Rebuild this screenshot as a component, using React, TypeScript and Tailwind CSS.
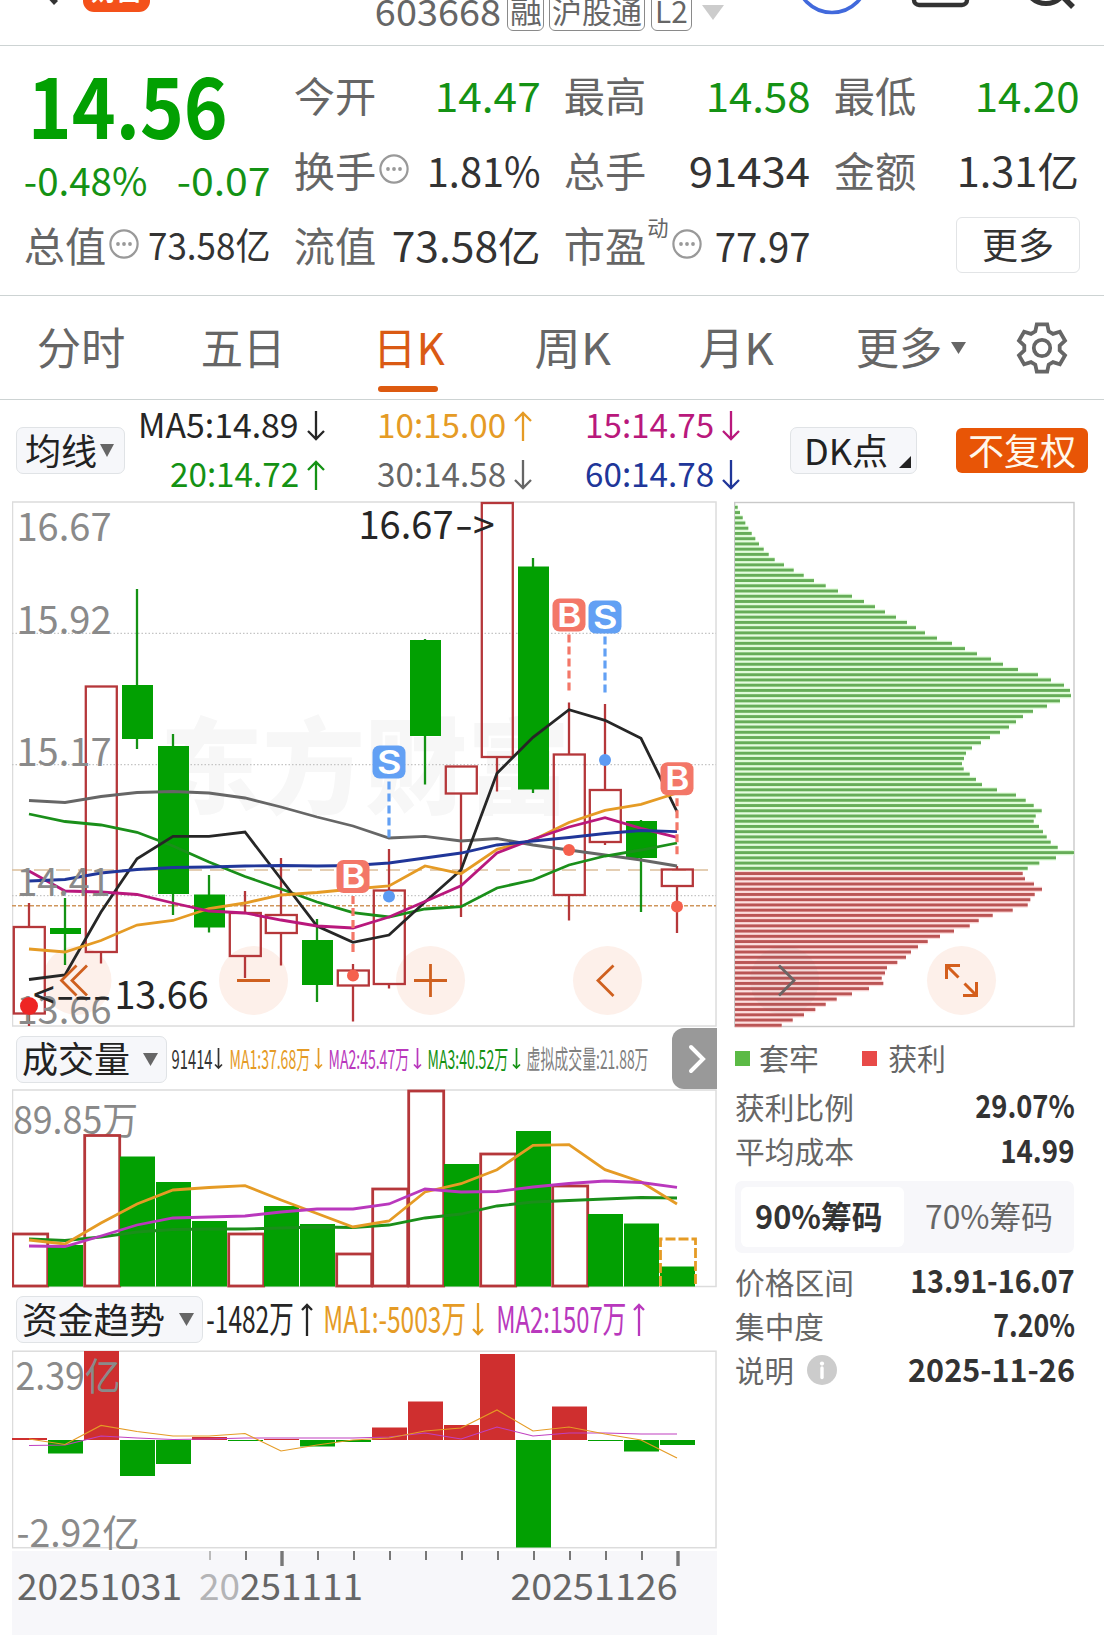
import React, { useLayoutEffect, useRef, useState } from "react";

const FONT = '"Noto Sans CJK SC", sans-serif';

/* Text squeezed or widened horizontally so that its ink spans exactly `w` pixels. */
function Fit({ w, size, className = "", children }: { w: number; size: number; className?: string; children: React.ReactNode }) {
  const ref = useRef<HTMLSpanElement>(null);
  const [scale, setScale] = useState(1);
  const bearing = size * 0.03;
  useLayoutEffect(() => {
    if (ref.current) setScale(w / (ref.current.offsetWidth - 2 * bearing));
  }, [w, size, bearing]);
  return (
    <span className={"block shrink-0 whitespace-nowrap leading-none " + className} style={{ width: w, fontSize: size }}>
      <span
        ref={ref}
        className="inline-block origin-left"
        style={{ transform: `translate(${-bearing * scale}px, -0.05em) scaleX(${scale})` }}
      >
        {children}
      </span>
    </span>
  );
}

function Dots() {
  return (
    <svg width="30" height="30" viewBox="0 0 30 30" className="shrink-0">
      <circle cx="15" cy="15" r="13.6" fill="none" stroke="#999" strokeWidth="2.2" />
      <circle cx="9" cy="15" r="1.9" fill="#999" />
      <circle cx="15" cy="15" r="1.9" fill="#999" />
      <circle cx="21" cy="15" r="1.9" fill="#999" />
    </svg>
  );
}

function Caret({ w = 14, h = 13, color = "#666" }: { w?: number; h?: number; color?: string }) {
  return (
    <svg width={w} height={h} viewBox="0 0 10 10" preserveAspectRatio="none" className="shrink-0">
      <path d="M0 0H10L5 10Z" fill={color} />
    </svg>
  );
}

function Arrow({ up = false, w = 18, h = 30 }: { up?: boolean; w?: number; h?: number }) {
  const m = w / 2;
  const head = m - 1;
  return (
    <svg width={w} height={h} className={up ? "shrink-0 rotate-180" : "shrink-0"} fill="none" stroke="currentColor" strokeWidth={w < 10 ? 1.7 : 2.3}>
      <path d={`M${m} 0V${h - 1.5}M1 ${h - 2 - head}L${m} ${h - 2}L${w - 1} ${h - 2 - head}`} />
    </svg>
  );
}

function Header() {
  return (
    <header className="flex h-[46px] items-start overflow-hidden border-b border-[#cdd3d3] text-[#666]">
      <svg width="83" height="44" viewBox="0 0 83 44">
        <path d="M42 -12L56 3" stroke="#333" strokeWidth="5.5" fill="none" />
      </svg>
      <div className="-mt-[26px] h-[38px] w-[67px] rounded-[11px] bg-[#f4511a] pl-[9px] pt-[4px] font-bold text-white">
        <Fit w={49} size={25}>财富</Fit>
      </div>
      <div className="ml-[226px] flex h-[24px] items-center">
        <Fit w={124} size={36}>603668</Fit>
      </div>
      <div className="-mt-[9px] ml-[7px] flex h-[40px] w-[37px] items-center justify-center rounded-[6px] border-[1.5px] border-[#8a8a8a]">
        <Fit w={30} size={30}>融</Fit>
      </div>
      <div className="-mt-[9px] ml-[5px] flex h-[40px] w-[96px] items-center justify-center rounded-[6px] border-[1.5px] border-[#8a8a8a]">
        <Fit w={88} size={30}>沪股通</Fit>
      </div>
      <div className="-mt-[9px] ml-[6px] flex h-[40px] w-[41px] items-center justify-center rounded-[6px] border-[1.5px] border-[#8a8a8a]">
        <Fit w={31} size={30}>L2</Fit>
      </div>
      <div className="ml-[10px] pt-[5px]"><Caret w={22} h={15} color="#ccc" /></div>
      <svg width="320" height="44" viewBox="780 0 320 44" className="ml-auto mr-[4px]" fill="none">
        <circle cx="832" cy="-23" r="35.5" stroke="#4169dc" strokeWidth="3.6" />
        <rect x="914" y="-40" width="53" height="45" rx="5" stroke="#333" strokeWidth="4.4" />
        <circle cx="1046" cy="-18" r="21.5" stroke="#333" strokeWidth="5" />
        <path d="M1060 -6L1073 7" stroke="#333" strokeWidth="5.5" />
      </svg>
    </header>
  );
}

function Cell({ label, lw = 80, children }: { label: string; lw?: number; children: React.ReactNode }) {
  return (
    <div className="flex h-[75px] items-center text-[#333]">
      <Fit w={lw} size={41} className="text-[#666]">{label}</Fit>
      {children}
    </div>
  );
}

function Quote() {
  return (
    <section className="flex h-[250px] gap-[26px] border-b border-[#cdd3d3] pl-[25px] pr-[25px] pt-[13px]">
      <div className="w-[244px]">
        <div className="flex h-[95px] items-center pl-[5px] font-bold text-[#02a002]">
          <Fit w={196} size={84}>14.56</Fit>
        </div>
        <div className="flex h-[55px] items-center justify-between text-[#149214]">
          <Fit w={121} size={39}>-0.48%</Fit>
          <Fit w={91} size={39}>-0.07</Fit>
        </div>
        <Cell label="总值">
          <div className="ml-[4px] mt-[-5px]"><Dots /></div>
          <Fit w={120} size={37} className="ml-auto">73.58亿</Fit>
        </Cell>
      </div>
      <div className="w-[244px]">
        <Cell label="今开"><Fit w={103} size={41} className="ml-auto text-[#149214]">14.47</Fit></Cell>
        <Cell label="换手">
          <div className="ml-[4px] mt-[-6px]"><Dots /></div>
          <Fit w={111} size={41} className="ml-auto">1.81%</Fit>
        </Cell>
        <Cell label="流值"><Fit w={146} size={41} className="ml-auto">73.58亿</Fit></Cell>
      </div>
      <div className="w-[244px]">
        <Cell label="最高"><Fit w={102} size={41} className="ml-auto text-[#149214]">14.58</Fit></Cell>
        <Cell label="总手"><Fit w={119} size={41} className="ml-auto">91434</Fit></Cell>
        <Cell label="市盈">
          <div className="ml-[3px] mb-[40px]"><Fit w={20} size={22} className="text-[#666]">动</Fit></div>
          <div className="ml-[4px] mt-[-5px]"><Dots /></div>
          <Fit w={93} size={41} className="ml-auto">77.97</Fit>
        </Cell>
      </div>
      <div className="w-[243px]">
        <Cell label="最低"><Fit w={102} size={41} className="ml-auto text-[#149214]">14.20</Fit></Cell>
        <Cell label="金额"><Fit w={120} size={41} className="ml-auto">1.31亿</Fit></Cell>
        <div className="flex h-[71px] items-center justify-end">
          <div className="-mr-[2px] flex h-[56px] w-[124px] items-center justify-center rounded-[6px] border-[1.5px] border-[#e2e4e6] text-[#333]">
            <Fit w={70} size={36}>更多</Fit>
          </div>
        </div>
      </div>
    </section>
  );
}

function Tabs() {
  return (
    <nav className="flex h-[104px] items-center border-b border-[#cdd3d3] pl-[38px] text-[#666]">
      <Fit w={86} size={44}>分时</Fit>
      <Fit w={82} size={44} className="ml-[78px]">五日</Fit>
      <div className="relative ml-[90px] text-[#da5a14]">
        <Fit w={69} size={44}>日K</Fit>
        <span className="absolute -bottom-[22px] left-[4px] h-[6px] w-[60px] rounded-full bg-[#dd5a10]" />
      </div>
      <Fit w={73} size={44} className="ml-[93px]">周K</Fit>
      <Fit w={72} size={44} className="ml-[91px]">月K</Fit>
      <Fit w={84} size={44} className="ml-[85px]">更多</Fit>
      <div className="ml-[10px]"><Caret w={15} h={12} /></div>
      <svg width="52" height="52" viewBox="-26 -26 52 52" className="ml-[50px]" fill="none" stroke="#666" strokeWidth="3.8">
        <path d="M-5.2 -23.6H5.2L6.7 -16.6L11 -14.1L17.9 -16.3L23 -7.4L17.7 -2.5V2.5L23 7.4L17.9 16.3L11 14.1L6.7 16.6L5.2 23.6H-5.2L-6.7 16.6L-11 14.1L-17.9 16.3L-23 7.4L-17.7 2.5V-2.5L-23 -7.4L-17.9 -16.3L-11 -14.1L-6.7 -16.6Z" />
        <circle r="8.2" />
      </svg>
    </nav>
  );
}

function MaItem({ w, up, className, children }: { w: number; up?: boolean; className: string; children: string }) {
  return (
    <div className={"flex h-[49px] items-center justify-end gap-[9px] " + className}>
      <Fit w={w} size={34}>{children}</Fit>
      <Arrow up={up} />
    </div>
  );
}

function MaBar() {
  return (
    <div className="flex h-[101px] items-center">
      <div className="ml-[16px] flex h-[47px] w-[109px] items-center gap-[4px] rounded-[7px] border border-[#e0e3e6] bg-[#f6f7fa] pl-[9px] text-[#222]">
        <Fit w={70} size={36}>均线</Fit>
        <Caret />
      </div>
      <div className="w-[200px]">
        <MaItem w={159} className="text-[#262626]">MA5:14.89</MaItem>
        <MaItem w={127} up className="text-[#149214]">20:14.72</MaItem>
      </div>
      <div className="w-[207px]">
        <MaItem w={127} up className="text-[#e59b25]">10:15.00</MaItem>
        <MaItem w={127} className="text-[#666]">30:14.58</MaItem>
      </div>
      <div className="w-[208px]">
        <MaItem w={127} className="text-[#b9187c]">15:14.75</MaItem>
        <MaItem w={127} className="text-[#203699]">60:14.78</MaItem>
      </div>
      <div className="ml-[50px] flex h-[47px] w-[127px] items-center rounded-[7px] border border-[#e0e3e6] bg-[#f6f7fa] pl-[14px] text-[#222]">
        <Fit w={82} size={36}>DK点</Fit>
        <svg width="12" height="12" className="ml-[12px] mt-[22px]"><path d="M12 0V12H0Z" fill="#222" /></svg>
      </div>
      <div className="ml-[39px] flex h-[45px] w-[132px] items-center justify-center rounded-[6px] bg-[#e85506] text-[#fff8ec]">
        <Fit w={106} size={36}>不复权</Fit>
      </div>
    </div>
  );
}

/* [isUp, high, top, bottom, low] in chart pixels, one candle every 36px */
const candles: [boolean, number, number, number, number][] = [
  [true, 903, 927, 1013.5, 1026],
  [false, 898, 928, 934, 965],
  [true, 687, 686.5, 952, 963.5],
  [false, 589, 685, 739, 749],
  [false, 734, 746, 894, 915],
  [false, 875, 894.5, 927.5, 932.5],
  [true, 891, 913, 956, 978],
  [true, 858, 915, 933, 965.5],
  [false, 919, 940, 985, 1002],
  [true, 964, 970.5, 985.5, 1021.5],
  [true, 849, 890.5, 984, 988.5],
  [false, 639, 640, 736, 784.5],
  [true, 766, 766.5, 793.5, 917],
  [true, 503, 503, 757, 791.5],
  [false, 558, 566.5, 789.5, 793],
  [true, 702.5, 754.5, 895, 920.5],
  [true, 704, 790, 842, 845],
  [false, 820, 821, 858, 912],
  [true, 866, 869.5, 886, 933],
];

const X = (i: number) => 29 + 36 * i;
const line = (ys: number[]) => ys.map((y, i) => `${X(i)},${y}`).join(" ");

const averages: [string, number[]][] = [
  ["#666666", [800.5, 802.5, 796.5, 792.5, 791.5, 793, 798, 807, 817, 826, 838, 836.3, 841, 838.5, 845, 850, 855, 860, 866]],
  ["#1a8f1a", [814, 821.5, 825, 832.3, 846, 862, 876.5, 889, 902, 912.7, 917, 909, 906.7, 888, 880, 865, 856, 850, 843]],
  ["#262626", [979.5, 975, 912, 858.7, 836.3, 836.3, 832, 879, 926, 942.3, 935, 902, 870, 773.3, 737.3, 709.7, 720.3, 738.3, 811.7]],
  ["#e59b25", [949, 952, 940.5, 925, 920.5, 908.5, 903, 895, 892.5, 889, 886, 866, 873.7, 849.3, 840, 822.5, 810.3, 804.3, 793]],
  ["#b9187c", [871, 891, 892, 894.5, 903, 911, 913, 920, 926, 928, 917, 901.5, 885.7, 853, 839.3, 827, 817.7, 828.3, 837.3]],
  ["#203699", [881, 879.5, 873, 869.5, 867.5, 867, 866, 865.5, 866, 865.5, 863, 858, 853, 845, 841, 837.5, 833.5, 830.5, 831.7]],
];

const RED = "#b5373a";
const GREEN = "#02a002";

/* letter, x, badge top */
const signals: [string, number, number][] = [
  ["B", 569, 598.5],
  ["S", 605, 600.5],
  ["S", 389, 745.5],
  ["B", 353, 860],
  ["B", 677, 762.3],
];

function Num({ x, y, w, size = 39, fill = "#8a8a8a", children }: { x: number; y: number; w: number; size?: number; fill?: string; children: string }) {
  return (
    <text x={x - 1.6} y={y + 0.6} textLength={w + 3.2} lengthAdjust="spacingAndGlyphs" fontSize={size} fill={fill}>{children}</text>
  );
}

function KLine() {
  return (
    <svg width="706" height="528" viewBox="12 501 706 528" className="block" fontFamily={FONT}>
      <rect x="12.5" y="502" width="703.5" height="524" fill="#fff" stroke="#dcdcdc" strokeWidth="1.5" />
      <text x="160" y="806" fontSize="104" fontWeight="900" textLength="410" lengthAdjust="spacingAndGlyphs" fill="#f7f7f7">东方财富</text>
      {[633.4, 764.6, 895.6].map((y) => (
        <path key={y} d={`M12 ${y}H716`} stroke="#c4c4c4" strokeWidth="1.2" strokeDasharray="1.5 2" />
      ))}
      <path d="M12 870H716" stroke="#dcbf9a" strokeWidth="1.5" strokeDasharray="14 8" />
      <path d="M12 905.7H716" stroke="#cf965c" strokeWidth="1.6" strokeDasharray="4 2" />
      {[77, 253.5, 430.5, 607.5].map((x) => <circle key={x} cx={x} cy="980.5" r="34.5" fill="#fdf0ea" />)}
      {candles.map(([up, h, t, b, l], i) => {
        const x = X(i);
        return up ? (
          <g key={i} fill="none" stroke={RED} strokeWidth="2.3">
            <path d={`M${x} ${h}V${t}M${x} ${b}V${l}`} />
            <rect x={x - 15.2} y={t} width="31" height={b - t} />
          </g>
        ) : (
          <g key={i}>
            <path d={`M${x} ${h}V${l}`} stroke="#149214" strokeWidth="2.3" />
            <rect x={x - 15} y={t} width="31" height={b - t} fill={GREEN} />
          </g>
        );
      })}
      {averages.map(([c, ys]) => (
        <polyline key={c} points={line(ys)} fill="none" stroke={c} strokeWidth="2.8" />
      ))}
      <Num x={18} y={540} w={92}>16.67</Num>
      <Num x={18} y={633} w={92}>15.92</Num>
      <Num x={18} y={765} w={92}>15.17</Num>
      <Num x={18} y={895.5} w={91}>14.41</Num>
      <Num x={18} y={1023} w={92}>13.66</Num>
      <circle cx="29" cy="1006" r="9" fill="#ee2524" />
      <g fontSize="39" fill="#262626">
        <text x="33" y="1008.5">&lt;</text>
        <text x="56" y="1008.5" textLength="55" lengthAdjust="spacingAndGlyphs">---</text>
        <Num x={116} y={1008} w={91} fill="#262626">13.66</Num>
        <Num x={360} y={538} w={92} fill="#262626">16.67</Num>
        <text x="455" y="538.5" textLength="18" lengthAdjust="spacingAndGlyphs">-</text>
        <text x="473" y="538.5">&gt;</text>
      </g>
      {signals.map(([s, x, y]) => {
        const c = s === "B" ? "#f37768" : "#62a0f4";
        return (
          <g key={x}>
            <path d={`M${x} ${y + 36}V${y + 93}`} stroke={c} strokeWidth="3.2" strokeDasharray="8 4" />
            <rect x={x - 16.5} y={y} width="33" height="33" rx="7" fill={c} />
            <text x={x - 12} y={y + 28} fontSize="32" fontWeight="600" textLength="24.5" lengthAdjust="spacingAndGlyphs" fill="#fff" fontFamily="Inter, sans-serif">{s}</text>
          </g>
        );
      })}
      {[[353, 975.5], [569, 850], [677, 906.5]].map(([x, y]) => <circle key={x} cx={x} cy={y} r="6" fill="#f5604d" />)}
      {[[389, 896.5], [605, 760]].map(([x, y]) => <circle key={x} cx={x} cy={y} r="6" fill="#5c9bf3" />)}
      <g stroke="#cf601f" strokeWidth="2.8" fill="none">
        <path d="M76.5 965.5L61.5 980.5L76.5 995.5M87 965.5L72 980.5L87 995.5" />
        <path d="M237 980.5H270M414 980.5H447M430.5 964V997" />
        <path d="M613.5 965.5L598 980.5L613.5 996" />
      </g>
    </svg>
  );
}

const chips = [
  2.7, 5, 7.7, 10.3, 13.3, 16.7, 20.3, 24, 28.7, 33.7, 39.7, 49, 58.7, 68.7, 79, 90.7, 103, 117, 129, 140,
  150, 161, 172, 181, 190, 202, 217, 230, 242, 256, 268, 283, 303, 316, 329, 335, 336, 325, 312, 298,
  288, 281, 274, 265, 255, 246, 237, 231, 229, 227, 228.7, 234.7, 241, 247, 262, 281, 290.7, 298.7, 306.7, 300.7,
  298.7, 304, 308, 311.7, 315.7, 322.7, 339, 321, 304.3, 292.7,
  287.7, 290, 299, 307, 299.7, 295.3, 292.7, 277.7, 257.7, 243.7, 234.7, 219, 205, 192.7, 183, 176, 171,
  162.3, 152, 150, 146.7, 148.3, 134, 117, 101.7, 90.7, 80.3, 69, 57.7, 46.7,
];

function Chips() {
  return (
    <svg width="342" height="528" viewBox="734 501 342 528" className="block">
      <rect x="734.7" y="502.5" width="339.3" height="524" fill="none" stroke="#c9c9c9" strokeWidth="1.4" />
      {chips.map((v, i) => {
        const y = 507.3 + i * 5.232;
        const green = i < 70;
        return (
          <g key={i}>
            <rect x="735" y={y - 2.6} width={v} height="5.3" fill={green ? "#dffbd8" : "#fbd9d9"} />
            <rect x="735" y={y - 1.45} width={v} height="2.9" fill={green ? "#66ad58" : "#bb5555"} />
          </g>
        );
      })}
      <circle cx="784.5" cy="980.5" r="34.5" fill="#666" opacity="0.06" />
      <path d="M779 965.5L794 980.5L779 995.5" fill="none" stroke="#6b6464" strokeWidth="2.8" />
      <circle cx="961.5" cy="980.5" r="34.5" fill="#fdf0ea" />
      <path d="M960 965.5H946.5V979M946.5 965.5L958.5 977.5M963 995.5H976.5V982M976.5 995.5L964.5 983.5" fill="none" stroke="#d45e1c" strokeWidth="3" />
    </svg>
  );
}

const volumes: [boolean, number][] = [
  [true, 1233], [false, 1245], [true, 1134.5], [false, 1156.5], [false, 1182], [false, 1221], [true, 1233],
  [false, 1206], [false, 1224], [true, 1253], [true, 1188], [true, 1090], [false, 1164], [true, 1153],
  [false, 1131], [true, 1185], [false, 1214], [false, 1223.5], [false, 1266.5],
];

function Volume() {
  return (
    <svg width="706" height="200" viewBox="12 1089 706 200" className="block" fontFamily={FONT}>
      <rect x="12.5" y="1090" width="703.5" height="196.5" fill="none" stroke="#dcdcdc" strokeWidth="1.5" />
      <Num x={14.5} y={1133.5} w={122} size={38}>89.85万</Num>
      {volumes.map(([up, t], i) => {
        const x = 12 + 36 * i;
        return up ? (
          <rect key={i} x={x + 0.7} y={t + 1} width="35" height={1285 - t} fill="#fff" stroke={RED} strokeWidth="2.8" />
        ) : (
          <rect key={i} x={x} y={t} width="35" height={1286.5 - t} fill={GREEN} />
        );
      })}
      <path d="M660.5 1286V1239H695.5V1286" fill="none" stroke="#e59b25" strokeWidth="2.8" strokeDasharray="10 3" />
      <g fill="none" strokeWidth="2.8">
        <polyline stroke="#1a8f1a" points={line([1239, 1240.5, 1237, 1232, 1229.5, 1229, 1229, 1228, 1227, 1227.5, 1225, 1218, 1214, 1206, 1202, 1200.5, 1199, 1197.5, 1198])} />
        <polyline stroke="#e59b25" points={line([1240, 1244, 1223, 1204, 1190, 1187.5, 1185.7, 1200, 1213.5, 1227, 1221, 1192, 1183.7, 1169.7, 1145.3, 1144.7, 1169.7, 1181.7, 1204])} />
        <polyline stroke="#b938bd" points={line([1246, 1246.5, 1236, 1225, 1218, 1217, 1216, 1212, 1209, 1209, 1204, 1189, 1192, 1191.5, 1187, 1183.5, 1181, 1182.5, 1187.3])} />
      </g>
    </svg>
  );
}

/* end of each bar, with the zero line at 1440 */
const funds = [1438, 1453.5, 1351, 1476, 1464, 1437, 1441, 1439, 1446.5, 1442, 1427.5, 1401.5, 1425, 1354, 1547.5, 1406.5, 1441, 1451.5, 1445];

function Funds() {
  return (
    <svg width="706" height="200" viewBox="12 1350 706 200" className="block" fontFamily={FONT}>
      <rect x="12.5" y="1351.2" width="703.5" height="196.5" fill="none" stroke="#dcdcdc" strokeWidth="1.5" />
      {funds.map((v, i) => (
        <rect key={i} x={12 + 36 * i} y={Math.min(v, 1440)} width="35" height={Math.abs(v - 1440)} fill={v < 1440 ? "#cf2f2f" : GREEN} />
      ))}
      <g fill="none" strokeWidth="1.2">
        <polyline stroke="#c040c0" points={line([1445.5, 1445, 1436, 1438, 1439.5, 1439, 1438, 1438, 1438, 1438, 1437, 1433, 1439, 1427, 1436, 1433, 1433, 1434, 1434])} />
        <polyline stroke="#e59b25" points={line([1439, 1444.5, 1425.5, 1431.5, 1436, 1436, 1433.5, 1451, 1445, 1440, 1438, 1431, 1428, 1410, 1431, 1427, 1434, 1440, 1458])} />
      </g>
      <Num x={17} y={1389.5} w={102} size={38}>2.39亿</Num>
      <Num x={18} y={1546} w={120} size={38}>-2.92亿</Num>
    </svg>
  );
}

function Dates() {
  return (
    <svg width="705" height="84" viewBox="12 1551 705 84" className="mt-[1px] block bg-[#f7f7fa]" fontFamily={FONT}>
      {Array.from({ length: 14 }, (_, i) => {
        const x = 210 + 36 * i;
        const big = i === 2 || i === 13;
        return <path key={i} d={`M${x} 1551V${big ? 1566 : 1560}`} stroke={i === 0 ? "#bbb" : "#777"} strokeWidth={big ? 3.4 : 2} />;
      })}
      <Num x={18.5} y={1599.5} w={162} size={36} fill="#666">20251031</Num>
      <text x="199" y="1600" fontSize="36" textLength="164" lengthAdjust="spacingAndGlyphs" fill="#666">
        <tspan fill="#b4b4b6">20</tspan>251111
      </text>
      <Num x={512} y={1599.5} w={164} size={36} fill="#666">20251126</Num>
    </svg>
  );
}

function Picker({ text, w, bw }: { text: string; w: number; bw: number }) {
  return (
    <div
      className="ml-[4px] flex h-[47px] shrink-0 items-center justify-between rounded-[7px] border border-[#e0e3e6] bg-[#f6f7fa] pl-[6px] pr-[8px] text-[#222]"
      style={{ width: bw }}
    >
      <Fit w={w} size={36}>{text}</Fit>
      <Caret w={15} />
    </div>
  );
}

function Stat({ label, w, value, vw, info }: { label: string; w: number; value: string; vw: number; info?: boolean }) {
  return (
    <div className="flex h-[44.3px] items-center">
      <Fit w={w} size={30} className="text-[#666]">{label}</Fit>
      {info && (
        <svg width="30" height="30" className="ml-[14px]">
          <circle cx="15" cy="15" r="15" fill="#ccc" />
          <circle cx="15" cy="8.6" r="2.1" fill="#fff" />
          <path d="M15 13V22.5" stroke="#fff" strokeWidth="3.4" strokeLinecap="round" />
        </svg>
      )}
      <Fit w={vw} size={31.5} className="ml-auto font-bold text-[#333]">{value}</Fit>
    </div>
  );
}

function Left() {
  return (
    <div className="w-[706px]">
      <KLine />
      <div className="flex h-[60px] items-center">
        <Picker text="成交量" w={106} bw={151} />
        <div className="ml-[5px] flex items-center text-[#333]"><Fit w={40} size={26}>91414</Fit><div className="ml-[2px]"><Arrow w={9} h={22} /></div></div>
        <div className="ml-[7px] flex items-center text-[#e59b25]"><Fit w={80} size={26}>MA1:37.68万</Fit><div className="ml-[4px]"><Arrow w={9} h={22} /></div></div>
        <div className="ml-[6px] flex items-center text-[#b938bd]"><Fit w={80} size={26}>MA2:45.47万</Fit><div className="ml-[4px]"><Arrow w={9} h={22} /></div></div>
        <div className="ml-[6px] flex items-center text-[#149214]"><Fit w={80} size={26}>MA3:40.52万</Fit><div className="ml-[4px]"><Arrow w={9} h={22} /></div></div>
        <Fit w={121} size={26} className="ml-[6px] text-[#808080]">虚拟成交量:21.88万</Fit>
        <div className="ml-auto mr-[1px] -mt-[1px] flex h-[61px] w-[45px] shrink-0 items-center justify-center rounded-l-[12px] bg-[#999]">
          <svg width="20" height="30" className="ml-[4px]" fill="none" stroke="#fff" strokeWidth="4" strokeLinecap="round"><path d="M4 3L16 15L4 27" /></svg>
        </div>
      </div>
      <Volume />
      <div className="flex h-[61px] items-center">
        <Picker text="资金趋势" w={141} bw={187} />
        <div className="ml-[4px] flex items-center text-[#262626]"><Fit w={86} size={37}>-1482万</Fit><div className="ml-[8px]"><Arrow up w={12} h={33} /></div></div>
        <div className="ml-[11px] flex items-center text-[#e59b25]"><Fit w={141} size={37}>MA1:-5003万</Fit><div className="ml-[7px]"><Arrow w={12} h={33} /></div></div>
        <div className="ml-[13px] flex items-center text-[#b938bd]"><Fit w={129} size={37}>MA2:1507万</Fit><div className="ml-[7px]"><Arrow up w={12} h={33} /></div></div>
      </div>
      <Funds />
      <Dates />
    </div>
  );
}

function Right() {
  return (
    <div className="ml-[16px] w-[342px]">
      <Chips />
      <div className="flex h-[58px] items-center pl-[1px] text-[#666]">
        <span className="h-[15px] w-[15px] bg-[#5bba45]" />
        <Fit w={58} size={30} className="ml-[10px]">套牢</Fit>
        <span className="ml-[44px] h-[15px] w-[15px] bg-[#e84a48]" />
        <Fit w={56} size={30} className="ml-[12px]">获利</Fit>
      </div>
      <div className="-mt-[2px] pl-[2px] pr-[2px]">
        <Stat label="获利比例" w={117} value="29.07%" vw={98} />
        <Stat label="平均成本" w={117} value="14.99" vw={73} />
      </div>
      <div className="ml-[1px] mt-[7px] flex h-[72px] w-[339px] rounded-[7px] bg-[#f7f7fa] p-[6px]">
        <div className="flex w-[163px] items-center rounded-[6px] bg-white pl-[15px] font-bold text-[#333]">
          <Fit w={126} size={32}>90%筹码</Fit>
        </div>
        <div className="flex flex-1 items-center pl-[22px] text-[#666]">
          <Fit w={126} size={32}>70%筹码</Fit>
        </div>
      </div>
      <div className="mt-[7px] pl-[2px] pr-[2px]">
        <Stat label="价格区间" w={117} value="13.91-16.07" vw={163} />
        <Stat label="集中度" w={87} value="7.20%" vw={80} />
        <Stat label="说明" w={57} value="2025-11-26" vw={165} info />
      </div>
    </div>
  );
}

export default function App() {
  return (
    <div className="h-[1636px] w-[1104px] overflow-hidden bg-white font-['Noto_Sans_CJK_SC',sans-serif]">
      <Header />
      <Quote />
      <Tabs />
      <MaBar />
      <div className="flex pl-[12px]">
        <Left />
        <Right />
      </div>
    </div>
  );
}
